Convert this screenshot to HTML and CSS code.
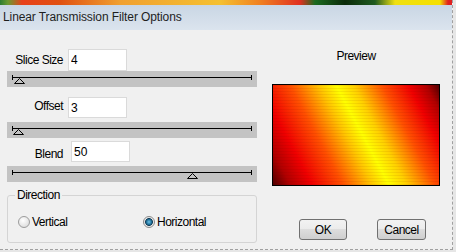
FILE: index.html
```html
<!DOCTYPE html>
<html lang="en">
<head>
    <meta charset="UTF-8">
    <title>Linear Transmission Filter Options</title>
    <link rel="stylesheet" href="styles.css">
</head>
<body>
    <div class="window">
        <div class="strip"></div>
        <div class="titlebar">Linear Transmission Filter Options</div>

        <div class="content">
            <div class="settings">
                <div class="field field-slice">
                    <label>Slice Size</label>
                    <input type="text" value="4">
                </div>
                <div class="slider">
                    <span class="track"></span>
                    <svg class="thumb" style="left: 7px" width="11" height="6" viewBox="0 0 11 6"><polygon points="0.5,5.5 5.5,0.5 10.5,5.5" fill="none" stroke="#000"/></svg>
                </div>

                <div class="field field-offset">
                    <label>Offset</label>
                    <input type="text" value="3">
                </div>
                <div class="slider">
                    <span class="track"></span>
                    <svg class="thumb" style="left: 6px" width="11" height="6" viewBox="0 0 11 6"><polygon points="0.5,5.5 5.5,0.5 10.5,5.5" fill="none" stroke="#000"/></svg>
                </div>

                <div class="field field-blend">
                    <label>Blend</label>
                    <input type="text" value="50">
                </div>
                <div class="slider">
                    <span class="track"></span>
                    <svg class="thumb" style="left: 180px" width="11" height="6" viewBox="0 0 11 6"><polygon points="0.5,5.5 5.5,0.5 10.5,5.5" fill="none" stroke="#000"/></svg>
                </div>

                <fieldset class="direction">
                    <legend>Direction</legend>
                    <div class="radio-row">
                        <label class="radio"><span class="dot"></span>Vertical</label>
                        <label class="radio"><span class="dot checked"></span>Horizontal</label>
                    </div>
                </fieldset>
            </div>

            <div class="preview-pane">
                <div class="preview-label">Preview</div>
                <div class="preview"></div>
                <div class="buttons">
                    <button class="btn-ok">OK</button>
                    <button class="btn-cancel">Cancel</button>
                </div>
            </div>
        </div>
    </div>
</body>
</html>
```

FILE: styles.css
```css
body {
    margin: 0;
    padding: 0;
    background-color: #e6e6e6;
    font-family: "Liberation Sans", Arial, sans-serif;
    font-size: 12px;
    letter-spacing: -0.5px;
    color: #000;
}
.window {
    width: 452px;
    height: 249px;
    background-color: #f0f0f0;
    border-right: 1px dashed #a0a0a0;
    border-bottom: 1px dashed #a0a0a0;
    overflow: hidden;
}
.strip {
    height: 5px;
    background: linear-gradient(90deg, #2e7d32 0, #6a9a30 8px, #e8401a 22px, #e05010 60px, #f0a030 120px, #f5c030 220px, #f08020 260px, #e03020 300px, #1a6a20 315px, #0a2a0a 345px, #1e5a20 375px, #f0e010 395px, #f5e000 440px, #e02020 448px);
}
.titlebar {
    height: 25px;
    line-height: 24px;
    padding-left: 3px;
    background: linear-gradient(#c9d6e4, #dbe4ee);
    font-size: 12px;
    letter-spacing: -0.1px;
    color: #1e1e1e;
    white-space: nowrap;
}
.content {
    display: flex;
    height: 219px;
}
.settings {
    width: 250px;
    margin-left: 7px;
}
.field {
    display: flex;
    align-items: center;
    height: 21px;
}
.field label {
    width: 56px;
    text-align: right;
    margin-right: 5px;
    white-space: nowrap;
}
.field input {
    width: 59px;
    height: 100%;
    box-sizing: border-box;
    border: 1px solid #dadada;
    background-color: #fff;
    padding: 0 2px;
    font-family: inherit;
    font-size: 12px;
    outline: none;
}
.field-slice {
    margin-top: 19px;
    height: 22px;
}
.field-offset {
    margin-top: 10px;
    align-items: flex-start;
}
.field-offset label {
    margin-top: 2px;
}
.field-blend {
    margin-top: 3px;
    align-items: flex-end;
}
.field-blend label {
    margin-bottom: 1px;
}
.field-blend input {
    margin-left: 3px;
}
.slider {
    position: relative;
    height: 16px;
    margin-top: 4px;
    background-color: #c3c3c3;
    overflow: hidden;
}
.field-slice + .slider {
    margin-top: 0;
}
.track {
    display: block;
    height: 5px;
    margin: 4px 5px 0 5px;
    border-left: 1px solid #000;
    border-right: 1px solid #000;
    background: linear-gradient(#000, #000) center / 100% 1px no-repeat;
}
.thumb {
    position: absolute;
    top: 7px;
    display: block;
}
.direction {
    margin: 6px 0 0;
    padding: 0;
    height: 55px;
    box-sizing: border-box;
    border: 1px solid #d4d4d4;
    border-radius: 3px;
    min-inline-size: 0;
}
.direction legend {
    margin-left: 7px;
    padding: 0 2px;
    line-height: 14px;
}
.radio-row {
    display: grid;
    grid-template-columns: 125px auto;
    padding: 13px 0 0 10px;
}
.radio {
    display: flex;
    align-items: center;
    gap: 2px;
}
.dot {
    width: 12px;
    height: 12px;
    box-sizing: border-box;
    border-radius: 50%;
    border: 1px solid #9c9c9c;
    background: radial-gradient(circle at 40% 35%, #ffffff, #d4d4d4);
}
.dot.checked {
    border-color: #8a8a8a;
    background: radial-gradient(circle at 50% 50%, #6cc4ea 0, #1f6f98 2.5px, #163f58 3.6px, #e4e4e4 4.2px, #f6f6f6 6px);
}
.preview-pane {
    width: 168px;
    margin-left: 15px;
}
.preview-label {
    margin-top: 19px;
    line-height: 14px;
    text-align: center;
}
.preview {
    height: 102px;
    margin-top: 21px;
    box-sizing: border-box;
    border: 1px solid #000;
    background: repeating-linear-gradient(180deg, rgba(90, 0, 0, 0.07) 0 1px, transparent 1px 3px),
                linear-gradient(62deg, #500000 0%, #b00000 8%, #f00000 18%, #ff5000 32%, #ffc400 45%, #ffff00 53%, #ffd000 61%, #ff5000 74%, #f00000 86%, #b00000 94%, #500000 100%);
}
.buttons {
    display: flex;
    gap: 30px;
    margin-top: 33px;
    padding-left: 27px;
}
.buttons button {
    height: 21px;
    padding: 0;
    border: 1px solid #707070;
    border-radius: 3px;
    background: linear-gradient(#f2f2f2 0, #ebebeb 50%, #dddddd 50%, #cfcfcf 100%);
    font-family: inherit;
    font-size: 12px;
    letter-spacing: -0.5px;
    color: #000;
}
.btn-ok {
    width: 48px;
}
.btn-cancel {
    width: 49px;
}
```
